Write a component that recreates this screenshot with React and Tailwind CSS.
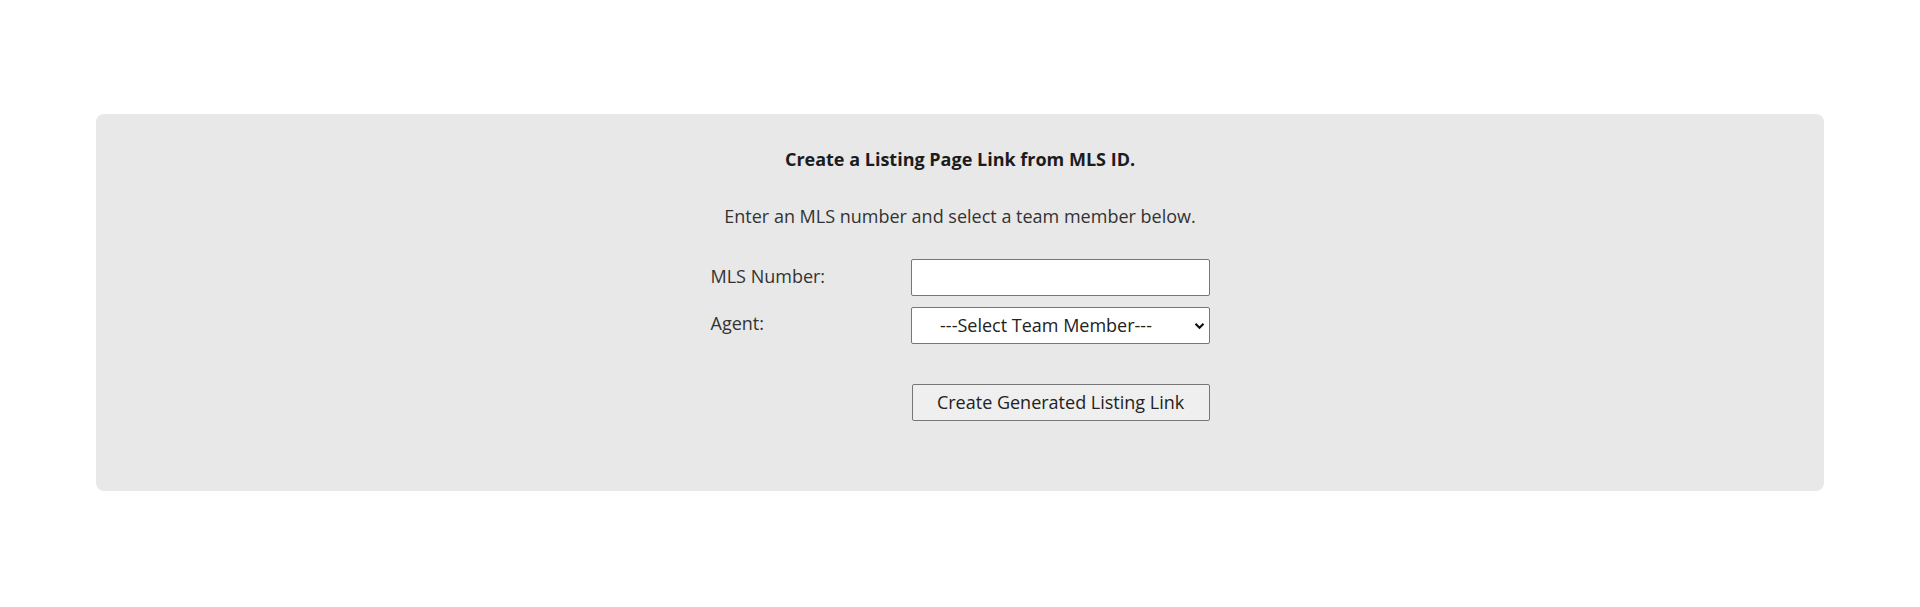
import React from "react";

const ListingLinkForm = () => {
  return (
    <div className="min-h-[607px] bg-white pt-[114px] font-['Open_Sans',sans-serif] text-[18px] text-[#333]">
      <div className="mx-auto w-[1728px] rounded-lg bg-[#e8e8e8] pt-[33px] pb-[70px]">
        {/* Heading */}
        <h2 className="text-center text-[18px] font-bold leading-[24px] text-[#1c1c1c]">
          Create a Listing Page Link from MLS ID.
        </h2>
        <p className="mt-[33px] text-center leading-[24px]">
          Enter an MLS number and select a team member below.
        </p>

        {/* Form */}
        <div className="mx-auto mt-[31px] w-[499px]">
          <div className="flex items-start">
            <label className="w-[200px] pt-[5px] leading-[24px]">MLS Number:</label>
            <input
              type="text"
              className="h-[37px] w-[299px] rounded-[2px] border border-[#767676] bg-white px-2 outline-none"
            />
          </div>
          <div className="mt-[11px] flex items-start">
            <label className="w-[200px] pt-[4px] leading-[24px]">Agent:</label>
            <div className="relative w-[299px]">
              <select className="h-[37px] w-full appearance-none rounded-[2px] border border-[#767676] bg-white pr-[30px] pl-[2px] text-center font-['Open_Sans',sans-serif] text-[18px] text-[#222] [text-align-last:center]">
                <option>---Select Team Member---</option>
              </select>
              <svg
                className="pointer-events-none absolute top-[15px] right-[5px]"
                width="11"
                height="8"
                viewBox="0 0 11 8"
              >
                <path d="M1.5 1.8 L5.5 5.8 L9.5 1.8" fill="none" stroke="#111" strokeWidth="2.2" />
              </svg>
            </div>
          </div>
          <div className="mt-[40px] flex">
            <div className="w-[202px]" />
            <button className="h-[37px] w-[299px] rounded-[2px] border border-[#767676] bg-[#efefef] text-[#222]">
              Create Generated Listing Link
            </button>
          </div>
        </div>
      </div>
    </div>
  );
};

export default function App() {
  return <ListingLinkForm />;
}
